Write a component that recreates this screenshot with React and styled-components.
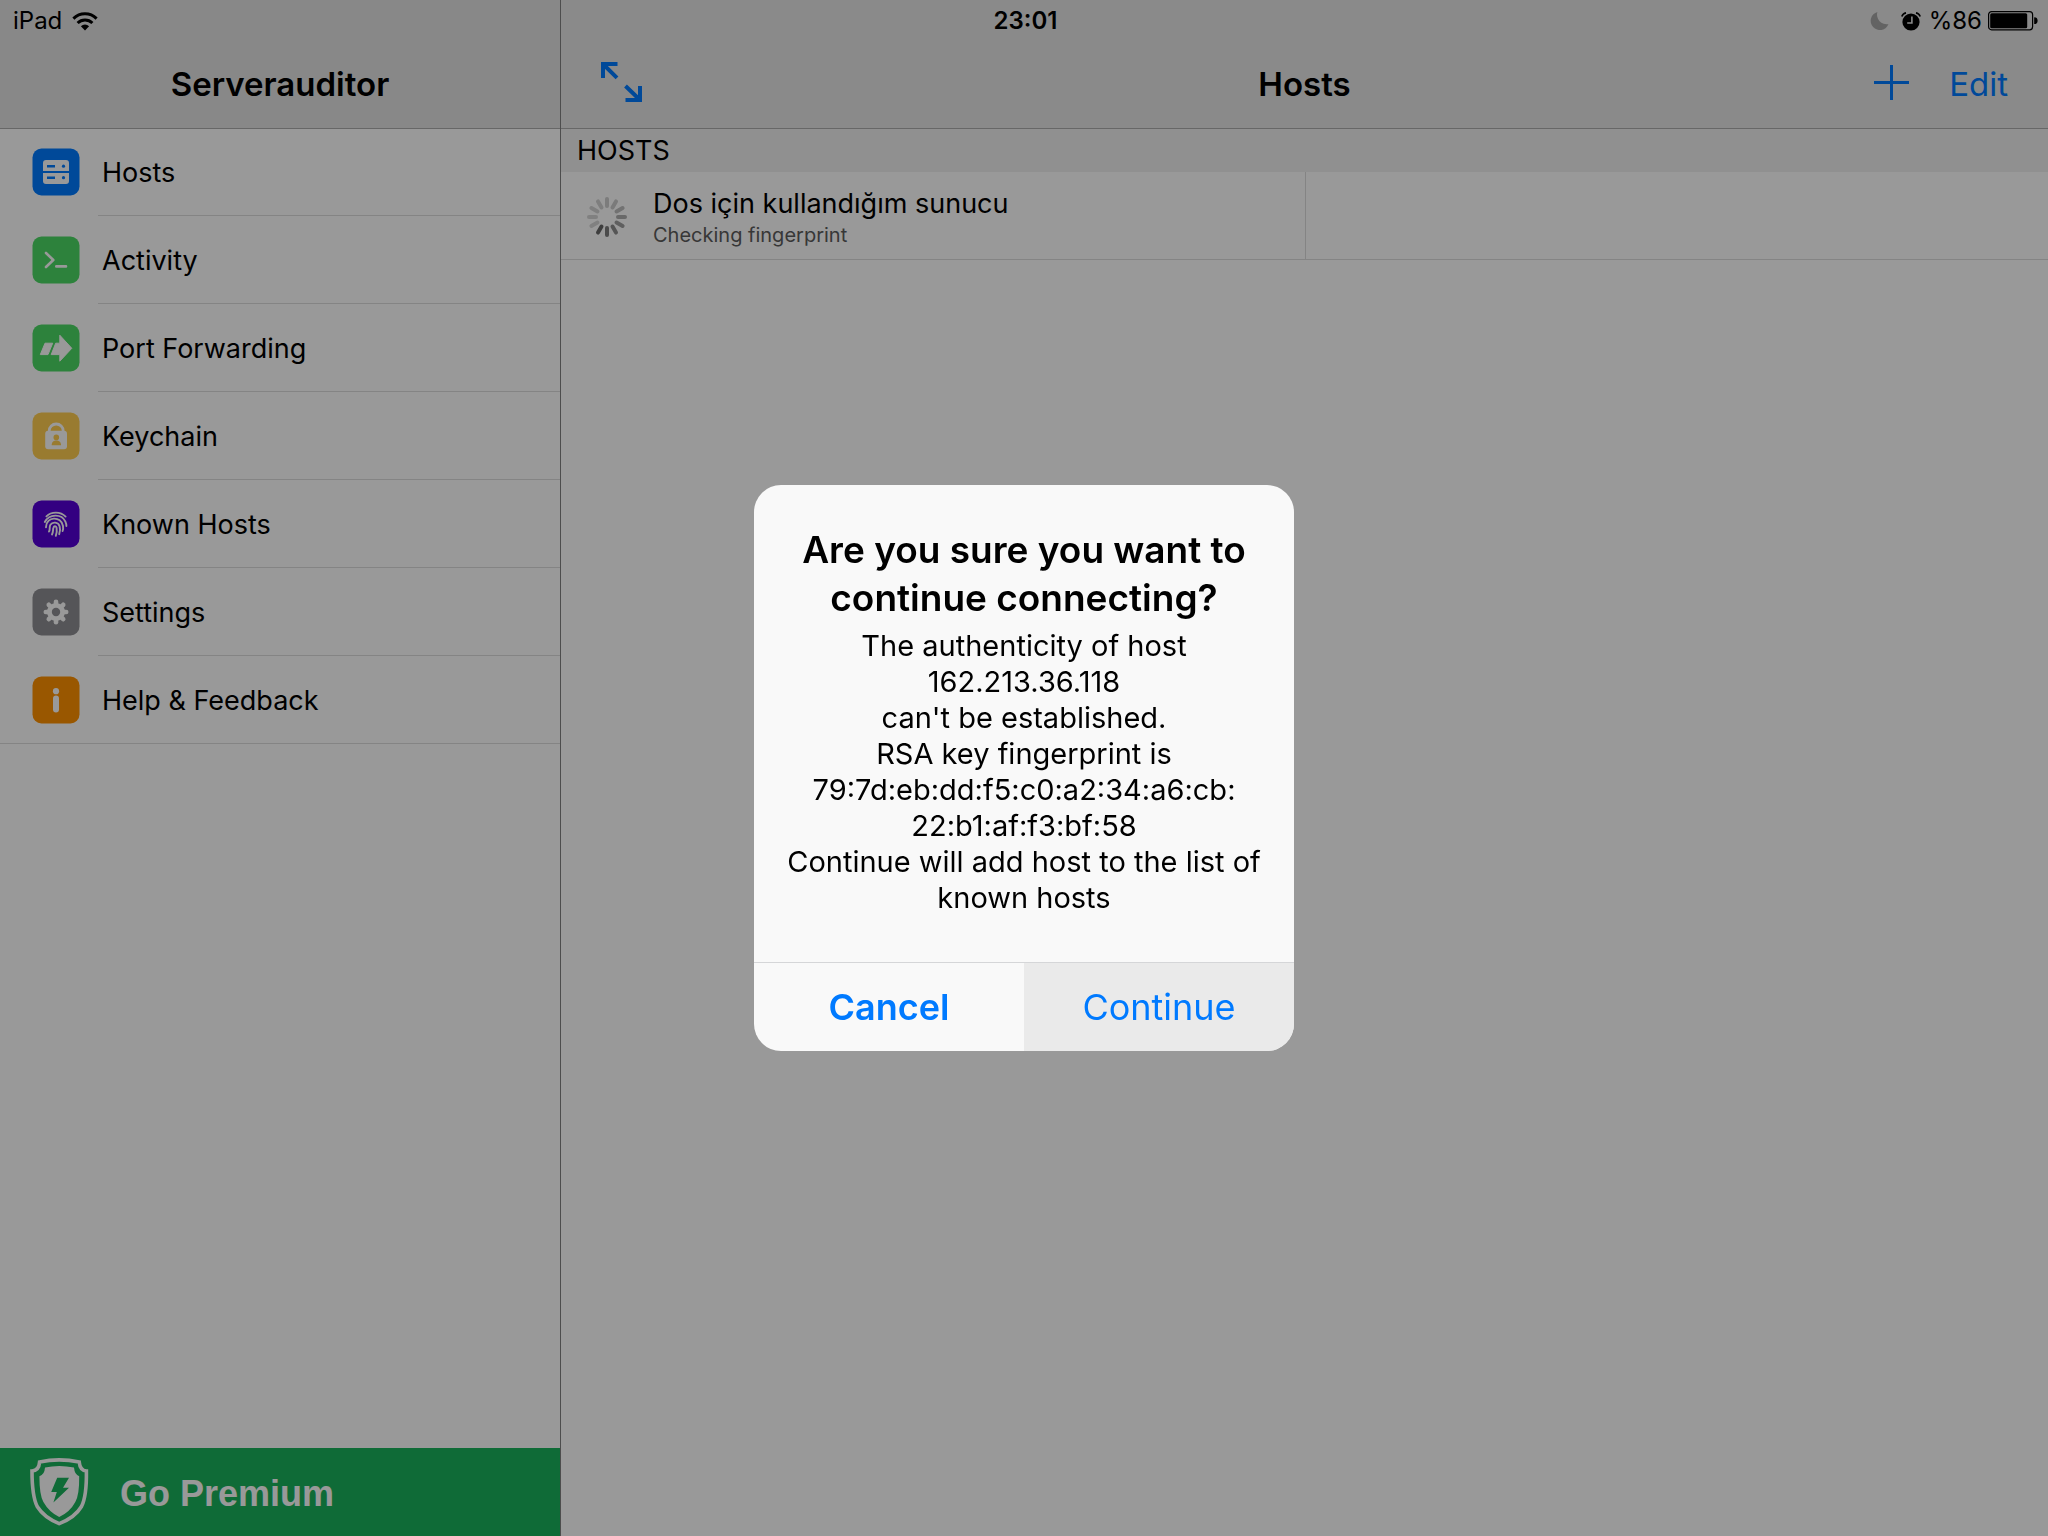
import React from 'react';
import styled, { createGlobalStyle } from 'styled-components';

const GlobalStyle = createGlobalStyle`
  *, *::before, *::after { box-sizing: border-box; }
  body {
    margin: 0;
    background: #fff;
    color: #000;
    font-family: Inter, "Liberation Sans", sans-serif;
  }
  h1, h2, p, ul { margin: 0; padding: 0; }
  ul { list-style: none; }
  svg { display: block; flex: none; }
`;

const Screen = styled.div`
  display: grid;
  grid-template-columns: minmax(280px, 561px) 1fr;
  min-height: 100vh;
`;

const StatusBar = styled.div`
  position: absolute;
  inset: 0 0 auto 0;
  z-index: 2;
  height: 42px;
  padding: 0 10px 0 13px;
  display: grid;
  grid-template-columns: 1fr auto 1fr;
  align-items: center;
  font-size: 24px;
  line-height: 42px;
`;

const StatusGroup = styled.div`
  display: flex;
  align-items: center;
  justify-content: ${(p) => (p.$end ? 'flex-end' : 'flex-start')};
  gap: ${(p) => (p.$end ? '6px' : '10px')};
`;

const StatusIcons = styled.div`
  display: flex;
  gap: 12px;
  margin-right: 2px;
`;

const Clock = styled.time`
  font-weight: 600;
`;

const Sidebar = styled.aside`
  display: flex;
  flex-direction: column;
  border-right: 1px solid #808080;
`;

const Main = styled.main`
  min-width: 0;
`;

const NavBar = styled.header`
  position: relative;
  z-index: 1;
  height: 128px;
  padding: 40px 40px 0;
  display: grid;
  grid-template-columns: 1fr auto 1fr;
  align-items: center;
  background: ${(p) => (p.$light ? '#e6e6e6' : '#e3e3e3')};
  box-shadow: 0 1px 0 #acacac;
`;

const NavTitle = styled.h1`
  grid-column: 2;
  font-size: 33px;
  font-weight: 600;
  line-height: 88px;
`;

const NavActions = styled.div`
  display: flex;
  align-items: center;
  justify-content: flex-end;
  gap: 40px;
`;

const PlainButton = styled.button`
  display: flex;
  align-items: center;
  justify-self: start;
  padding: ${(p) => (p.$icon ? '0 0 4px' : '0')};
  border: 0;
  background: none;
  color: #007aff;
  font: 400 33px/88px Inter, "Liberation Sans", sans-serif;
`;

const MenuLabel = styled.span`
  flex: 1;
  height: 88px;
  padding-left: 4px;
  border-bottom: 1px solid #dcdcdc;
  font-size: 27px;
  line-height: 90px;
`;

const MenuItem = styled.li`
  &:last-child {
    border-bottom: 1px solid #dcdcdc;
  }
  &:last-child ${MenuLabel} {
    height: 87px;
    border-bottom: 0;
  }
`;

const MenuLink = styled.a`
  display: flex;
  align-items: center;
  padding-left: 32px;
  gap: 18px;
  color: inherit;
  text-decoration: none;
`;

const Premium = styled.button`
  display: flex;
  align-items: center;
  gap: 30px;
  height: 88px;
  margin-top: auto;
  padding: 0 30px;
  border: 0;
  background: #1ab25c;
  color: #fff;
  font: 700 36px/40px "Liberation Sans", Arial, sans-serif;
`;

const PremiumLabel = styled.span`
  padding-top: 4px;
`;

const SectionTitle = styled.h2`
  padding: 2px 16px 0;
  background: #f0f0f0;
  font-size: 27px;
  font-weight: 400;
  line-height: 42px;
`;

const HostGrid = styled.ul`
  display: grid;
  grid-template-columns: 1fr 1fr;
  border-bottom: 1px solid #dcdcdc;
`;

const HostCell = styled.li`
  display: flex;
  align-items: center;
  gap: 26px;
  height: 87px;
  padding: 2px 0 0 26px;
  & + & {
    border-left: 1px solid #dcdcdc;
  }
`;

const HostName = styled.p`
  font-size: 27px;
  line-height: 36px;
`;

const HostState = styled.p`
  color: #5c5c5c;
  font-size: 20px;
  line-height: 26px;
`;

const Scrim = styled.div`
  position: fixed;
  inset: 0;
  z-index: 3;
  display: grid;
  place-items: center;
  background: rgba(0, 0, 0, 0.4);
`;

const Alert = styled.div`
  width: 540px;
  max-width: 100%;
  overflow: hidden;
  border-radius: 27px;
  background: #f9f9f9;
  text-align: center;
`;

const AlertBody = styled.div`
  padding: 41px 20px 46px;
`;

const AlertTitle = styled.h2`
  font-size: 37px;
  font-weight: 600;
  line-height: 48px;
`;

const AlertText = styled.p`
  padding-top: 6px;
  font-size: 29px;
  line-height: 36px;
  white-space: pre-line;
`;

const AlertActions = styled.div`
  display: grid;
  grid-template-columns: 1fr 1fr;
  border-top: 1px solid #d5d6d8;
`;

const AlertButton = styled.button`
  height: 88px;
  padding: 0;
  border: 0;
  background: ${(p) => (p.$pressed ? '#eaeaea' : 'transparent')};
  color: #007aff;
  font: ${(p) => (p.$strong ? 600 : 400)} 36px/88px Inter, "Liberation Sans", sans-serif;
`;

const Tile = ({ color, children }) => (
  <svg width="48" height="48" viewBox="0 0 48 48" aria-hidden="true">
    <rect x="0.5" y="0.5" width="47" height="47" rx="9" fill={color} />
    {children}
  </svg>
);

const HostsIcon = () => (
  <Tile color="#007aff">
    <path fill="#fff" d="M14 12H34a3 3 0 0 1 3 3V23H11V15a3 3 0 0 1 3-3ZM11 25H37V33a3 3 0 0 1-3 3H14a3 3 0 0 1-3-3Z" />
    <path stroke="#007aff" strokeWidth="2.4" d="M15 18.2H23M15 29.7H23" />
    <circle cx="31.5" cy="18.2" r="1.6" fill="#007aff" />
    <circle cx="31.5" cy="29.7" r="1.6" fill="#007aff" />
  </Tile>
);

const ActivityIcon = () => (
  <Tile color="#4cd964">
    <path fill="none" stroke="#fff" strokeWidth="2.6" strokeLinecap="round" strokeLinejoin="round" d="M14 17L21.3 24L14 31M24.3 30.4H34" />
  </Tile>
);

const ForwardIcon = () => (
  <Tile color="#4cd964">
    <g fill="#fff" stroke="#fff" strokeWidth="1" strokeLinejoin="round">
      <path d="M13 19.2H20.7L16 30.6H8.3Z" />
      <path d="M23.7 19.2H27.8V11.2L39.8 24.3L27.8 37.2V30.6H19.2Z" />
    </g>
  </Tile>
);

const KeychainIcon = () => (
  <Tile color="#ffcd50">
    <path fill="none" stroke="#fff" strokeWidth="2.8" d="M17.2 21V19a7 7 0 0 1 14 0V21" />
    <rect x="13.2" y="18.7" width="21.8" height="18.6" rx="3" fill="#fff" />
    <circle cx="24.3" cy="25.4" r="2.8" fill="#ffcd50" />
    <path fill="#ffcd50" d="M19.7 33.3V32.4C19.9 30 21.6 28.4 24.3 28.4S28.8 30 29 32.4V33.3Z" />
  </Tile>
);

const FingerprintIcon = () => (
  <Tile color="#5500d7">
    <g fill="none" stroke="#fff" strokeWidth="1.9" strokeLinecap="round">
      <path d="M14.4 16.4C19.4 11.4 28.4 11.4 33.6 16.6" />
      <path d="M12.8 22C17.4 13.6 29.6 13.6 33.4 21.6C34 22.9 34.4 24.4 34.4 26" />
      <path d="M14 27.2C14 16.2 29.4 15.8 31 26C31.3 27.8 31.2 29.4 30.6 31" />
      <path d="M17 31.6C18.4 29.4 17 27 18.4 24.8C20.4 21.6 26.2 21.8 27.6 26.2C28.4 29 28.2 31.8 27.2 34.2" />
      <path d="M20 34.4C21.4 32 20.8 29.8 21.4 27.8C22 25.6 24.2 25.8 24.6 27.9C25 30.6 24.8 33.2 23.8 35.8" />
    </g>
  </Tile>
);

const SettingsIcon = () => (
  <Tile color="#8e8e93">
    <g stroke="#fff" strokeWidth="4.6" strokeLinecap="round">
      {[0, 45, 90, 135].map((a) => (
        <path key={a} d="M24 13.8V34.2" transform={`rotate(${a} 24 24)`} />
      ))}
    </g>
    <circle cx="24" cy="24" r="9" fill="#fff" />
    <circle cx="24" cy="24" r="4.2" fill="#8e8e93" />
  </Tile>
);

const HelpIcon = () => (
  <Tile color="#ff9100">
    <circle cx="24" cy="15.2" r="3.1" fill="#fff" />
    <rect x="21" y="19.4" width="6" height="17" rx="3" fill="#fff" />
  </Tile>
);

const Wifi = () => (
  <svg width="26" height="19" viewBox="0 0 26 19" aria-hidden="true">
    <g fill="none" stroke="#000" strokeWidth="3">
      <path d="M1.4 6.6A16.6 16.6 0 0 1 24.6 6.6" />
      <path d="M5.6 11A10.6 10.6 0 0 1 20.4 11" />
    </g>
    <path d="M8.9 14.2A6 6 0 0 1 17.1 14.2L13 18.6Z" />
  </svg>
);

const Moon = () => (
  <svg width="19" height="18" viewBox="0 0 19 18" aria-hidden="true">
    <path fill="#a6a6a6" d="M7.4 0A9.2 9.2 0 1 0 18.5 12.1A9.6 9.6 0 0 1 7.4 0Z" />
  </svg>
);

const Alarm = () => (
  <svg width="20" height="19" viewBox="0 0 20 19" aria-hidden="true">
    <circle cx="10" cy="10" r="8.6" />
    <path fill="none" stroke="#000" strokeWidth="1.6" d="M0.8 4.6A5.4 5.4 0 0 1 5 .9M19.2 4.6A5.4 5.4 0 0 0 15 .9" />
    <path fill="none" stroke="#e6e6e6" strokeWidth="1.6" d="M10.9 4.4V11H6.2" />
  </svg>
);

const Battery = () => (
  <svg width="50" height="20" viewBox="0 0 50 20" aria-hidden="true">
    <rect x="0.6" y="0.6" width="44" height="18.2" rx="3" fill="none" stroke="#000" strokeWidth="1.2" />
    <rect x="2.2" y="2.2" width="37" height="15" rx="1.5" />
    <path d="M46.2 6.3A3.4 3.4 0 0 1 46.2 13.1Z" />
  </svg>
);

const Expand = () => (
  <svg width="41" height="40" viewBox="0 0 41 40" aria-hidden="true">
    <g fill="none" stroke="#007aff" strokeWidth="4">
      <path d="M2 16V2H16.5M2.5 2.5L16 15.8" />
      <path d="M39 24V38H24.5M38.5 37.5L24.5 24" />
    </g>
  </svg>
);

const Plus = () => (
  <svg width="35" height="35" viewBox="0 0 35 35" aria-hidden="true">
    <path stroke="#007aff" strokeWidth="3" d="M17.5 0V35M0 17.5H35" />
  </svg>
);

const spokeTones = ['#cfcfcf', '#cbcbcb', '#bebebe', '#afafaf', '#9e9e9e', '#8e8e8e', '#7e7e7e', '#686868', '#d6d6d6', '#d6d6d6', '#d4d4d4', '#d2d2d2'];

const Spinner = () => (
  <svg width="40" height="40" viewBox="0 0 40 40" role="img" aria-label="Loading">
    {spokeTones.map((tone, i) => (
      <path key={i} d="M20 2V9" stroke={tone} strokeWidth="4" strokeLinecap="round" transform={`rotate(${i * 30} 20 20)`} />
    ))}
  </svg>
);

const Shield = () => (
  <svg width="60" height="80" viewBox="0 0 60 80" aria-hidden="true">
    <path fill="none" stroke="#fff" strokeWidth="3.6" d="M9.6 9.9Q29 5.8 49.2 9.9Q50 18.6 56.4 19Q56.8 44 51.5 54.5Q45 65.5 29.2 71.6Q14 65.5 7.2 54.5Q2 44 2 19Q9 18.6 9.6 9.9Z" />
    <path fill="#fff" d="M15 15.6Q29 12.4 44 15.6Q44.6 23 49.2 24.2Q49.4 43 45.3 50Q40 60 29.2 65Q19 60 13.4 50Q9.4 43 9.4 24.2Q14.5 23 15 15.6Z" />
    <path fill="#1ab25c" d="M27.2 25.8H39L33 35.8H39L23.4 50.4L26.8 40H21.2Z" />
  </svg>
);

const menu = [
  ['Hosts', HostsIcon],
  ['Activity', ActivityIcon],
  ['Port Forwarding', ForwardIcon],
  ['Keychain', KeychainIcon],
  ['Known Hosts', FingerprintIcon],
  ['Settings', SettingsIcon],
  ['Help & Feedback', HelpIcon],
];

const message = `The authenticity of host
162.213.36.118
can't be established.
RSA key fingerprint is
79:7d:eb:dd:f5:c0:a2:34:a6:cb:
22:b1:af:f3:bf:58
Continue will add host to the list of known hosts`;

export default function App() {
  return (
    <>
      <GlobalStyle />
      <StatusBar>
        <StatusGroup>
          iPad
          <Wifi />
        </StatusGroup>
        <Clock>23:01</Clock>
        <StatusGroup $end>
          <StatusIcons>
            <Moon />
            <Alarm />
          </StatusIcons>
          %86
          <Battery />
        </StatusGroup>
      </StatusBar>
      <Screen>
        <Sidebar>
          <NavBar>
            <NavTitle>Serverauditor</NavTitle>
          </NavBar>
          <nav>
            <ul>
              {menu.map(([label, Icon]) => (
                <MenuItem key={label}>
                  <MenuLink href="#">
                    <Icon />
                    <MenuLabel>{label}</MenuLabel>
                  </MenuLink>
                </MenuItem>
              ))}
            </ul>
          </nav>
          <Premium type="button">
            <Shield />
            <PremiumLabel>Go Premium</PremiumLabel>
          </Premium>
        </Sidebar>
        <Main>
          <NavBar $light>
            <PlainButton type="button" $icon aria-label="Toggle full screen">
              <Expand />
            </PlainButton>
            <NavTitle>Hosts</NavTitle>
            <NavActions>
              <PlainButton type="button" $icon aria-label="Add host">
                <Plus />
              </PlainButton>
              <PlainButton type="button">Edit</PlainButton>
            </NavActions>
          </NavBar>
          <SectionTitle>HOSTS</SectionTitle>
          <HostGrid>
            <HostCell>
              <Spinner />
              <div>
                <HostName>Dos için kullandığım sunucu</HostName>
                <HostState>Checking fingerprint</HostState>
              </div>
            </HostCell>
            <HostCell />
          </HostGrid>
        </Main>
      </Screen>
      <Scrim>
        <Alert role="alertdialog" aria-modal="true" aria-labelledby="alert-title" aria-describedby="alert-text">
          <AlertBody>
            <AlertTitle id="alert-title">Are you sure you want to continue connecting?</AlertTitle>
            <AlertText id="alert-text">{message}</AlertText>
          </AlertBody>
          <AlertActions>
            <AlertButton type="button" $strong>Cancel</AlertButton>
            <AlertButton type="button" $pressed>Continue</AlertButton>
          </AlertActions>
        </Alert>
      </Scrim>
    </>
  );
}
